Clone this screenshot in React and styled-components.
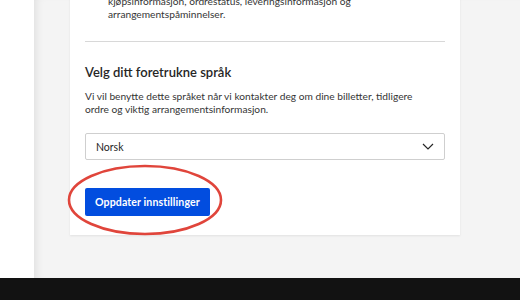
import React from "react";
import styled, { createGlobalStyle } from "styled-components";

const Global = createGlobalStyle`
  html, body { margin: 0; padding: 0; }
  body {
    width: 520px; height: 300px; overflow: hidden; background: #fff;
    font-family: Lato, "Open Sans", sans-serif; color: #262626;
  }
`;

const Page = styled.div`
  display: flex;
  flex-direction: column;
  width: 520px;
  height: 300px;
`;

const Body = styled.div`
  display: flex;
  height: 278px;
  overflow: hidden;
`;

const SideStrip = styled.div`
  width: 34px;
  background: #fff;
  flex-shrink: 0;
`;

const Main = styled.div`
  flex: 1;
  background: #f4f4f4;
  box-shadow: inset 8px 0 8px -6px rgba(0, 0, 0, 0.09);
  padding-left: 36px;
`;

const Card = styled.section`
  position: relative;
  width: 360px;
  margin-top: -14px;
  background: #fff;
  padding: 9px 15px 19px;
  box-shadow: 0 1px 2px rgba(0, 0, 0, 0.08);
`;

const ListText = styled.p`
  margin: 0 0 20px 23px;
  font-size: 10.2px;
  line-height: 13px;
  color: #353535;
`;

const Divider = styled.hr`
  border: 0;
  border-top: 1px solid #d8d8d8;
  margin: 0 0 22px;
`;

const Heading = styled.h2`
  margin: 0 0 10px;
  font-size: 13px;
  line-height: 16px;
  font-weight: 600;
  color: #262626;
`;

const Para = styled.p`
  margin: 0 0 17px;
  font-size: 10.2px;
  line-height: 13px;
  color: #353535;
`;

const Select = styled.div`
  display: flex;
  align-items: center;
  justify-content: space-between;
  height: 27px;
  box-sizing: border-box;
  border: 1px solid #cfcfcf;
  border-radius: 2px;
  padding: 0 10px 0 10px;
  font-size: 10.5px;
  color: #262626;
  margin-bottom: 28px;
`;

const Button = styled.button`
  height: 28px;
  padding: 0 10px;
  background: #024ddf;
  color: #fff;
  border: 0;
  border-radius: 2px;
  font-family: inherit;
  font-size: 10.6px;
  font-weight: 700;
  letter-spacing: 0.1px;
`;

const Annotation = styled.svg`
  position: absolute;
  left: -3px;
  top: 178px;
  overflow: visible;
  pointer-events: none;
`;

const Footer = styled.footer`
  height: 22px;
  background: #121212;
`;

export default function App() {
  return (
    <Page>
      <Global />
      <Body>
        <SideStrip />
        <Main>
          <Card>
            <ListText>
              kjøpsinformasjon, ordrestatus, leveringsinformasjon og
              <br />
              arrangementspåminnelser.
            </ListText>
            <Divider />
            <Heading>Velg ditt foretrukne språk</Heading>
            <Para>
              Vi vil benytte dette språket når vi kontakter deg om dine billetter, tidligere
              <br />
              ordre og viktig arrangementsinformasjon.
            </Para>
            <Select>
              <span>Norsk</span>
              <svg width="12" height="7" viewBox="0 0 12 7">
                <path d="M1 1l5 5 5-5" fill="none" stroke="#262626" strokeWidth="1.2" />
              </svg>
            </Select>
            <Button>Oppdater innstillinger</Button>
            <Annotation width="160" height="74" viewBox="0 0 160 74">
              <ellipse cx="78" cy="36" rx="76" ry="34" fill="none" stroke="#e0453b" strokeWidth="2.6" />
            </Annotation>
          </Card>
        </Main>
      </Body>
      <Footer />
    </Page>
  );
}
